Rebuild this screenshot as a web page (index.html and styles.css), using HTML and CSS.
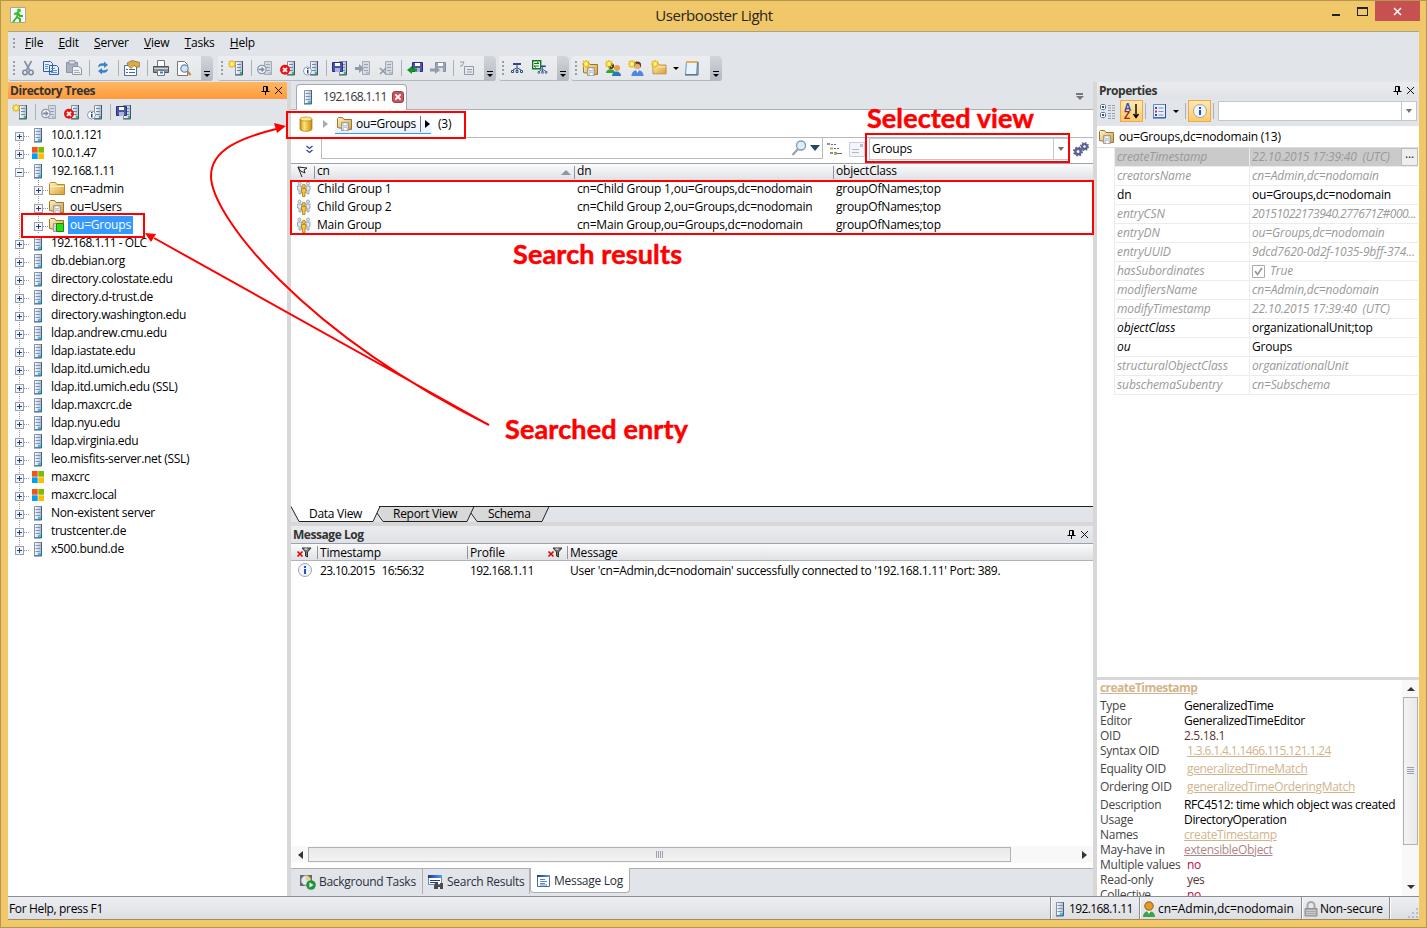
FILE: index.html
```html
<!DOCTYPE html>
<html lang="en">
<head>
  <meta charset="UTF-8" />
  <title>Userbooster Light</title>
  <link rel="stylesheet" href="styles.css">
</head>
<body>
  <!-- icon sprite -->
  <svg class="sprite">
    <defs>
      <linearGradient id="gFolder" x1="0" y1="0" x2="1" y2="1"><stop offset="0" stop-color="#fff3c4"/><stop offset="1" stop-color="#d9a02e"/></linearGradient>
      <linearGradient id="gGold" x1="0" x2="1"><stop offset="0" stop-color="#c98a08"/><stop offset=".35" stop-color="#ffe57a"/><stop offset="1" stop-color="#c98a08"/></linearGradient>
      <linearGradient id="gServer" x1="0" x2="1"><stop offset="0" stop-color="#ffffff"/><stop offset="1" stop-color="#a9bbd4"/></linearGradient>
      <linearGradient id="gCaption" x1="0" x2="1"><stop offset="0" stop-color="#16399c"/><stop offset="1" stop-color="#5b9cf2"/></linearGradient>
    </defs>
    <symbol id="server" viewBox="0 0 16 16"><path d="M4.500 1.500h7v13h-7z" fill="url(#gServer)" stroke="#8093ad"/><path d="M11.500 1v14H4" fill="none" stroke="#466080"/><path d="M5.500 4.500h5M5.500 7.500h5M5.500 10.500h5" stroke="#7f95b1"/><path d="M8 12h3v2H8z" fill="#23c6e8"/></symbol>
    <symbol id="srv" viewBox="0 0 16 16"><path d="M7.500 1.500h7v13h-7z" fill="url(#gServer)" stroke="#8290a6"/><path d="M14.500 1v14H7" fill="none" stroke="#43536c"/><path d="M9 4.500h4M9 7.500h4M9 10.500h4" stroke="#7388a5"/><path d="M12 12h2v2h-2z" fill="#28c84a"/></symbol>
    <symbol id="srv-gray" viewBox="0 0 16 16"><path d="M7.500 1.500h7v13h-7z" fill="#d5d9e1" stroke="#a3abb9"/><path d="M9 4.500h4M9 7.500h4M9 10.500h4M11 13h3" stroke="#9aa3b3"/></symbol>
    <symbol id="spark" viewBox="0 0 16 16"><path d="M4 0v8M0 4h8M1 1l6 6M7 1L1 7" stroke="#e9b90a" stroke-width="1.500"/><circle cx="4" cy="4" r="1.900" fill="#fff38a"/></symbol>
    <symbol id="new-server" viewBox="0 0 16 16"><use href="#srv"/><use href="#spark"/></symbol>
    <symbol id="connect" viewBox="0 0 16 16"><use href="#srv-gray"/><circle cx="4.800" cy="9.500" r="4.200" fill="#fff" stroke="#8d98ab" stroke-width="1.200"/><path d="M1.500 8.500h3v-2l3.500 3-3.500 3v-2h-3z" fill="#8290a6"/></symbol>
    <symbol id="disconnect" viewBox="0 0 16 16"><use href="#srv"/><circle cx="5" cy="9.800" r="5" fill="#f00f10"/><path d="M3 7.800l4 4M7 7.800l-4 4" stroke="#fff" stroke-width="1.800"/></symbol>
    <symbol id="server-info" viewBox="0 0 16 16"><use href="#srv"/><circle cx="4.500" cy="11" r="4" fill="#fff" stroke="#8f9cb2"/><path d="M4 8h1.500v1.200H4zM4 10h1.500v3.500H4z" fill="#1c3f99"/></symbol>
    <symbol id="floppy" viewBox="0 0 16 16"><path d="M.5 2.500h10v9H.5z" fill="#4c53ac" stroke="#292f78"/><path d="M3 3h5v3H3z" fill="#fff"/><path d="M3 8h5v4H3z" fill="#aeb4d8"/></symbol>
    <symbol id="floppy-gray" viewBox="0 0 16 16"><path d="M.5 2.500h10v9H.5z" fill="#9ba3b3" stroke="#858fa1"/><path d="M3 3h5v3H3z" fill="#fff"/><path d="M3 8h5v4H3z" fill="#dadee5"/></symbol>
    <symbol id="save-server" viewBox="0 0 16 16"><use href="#srv"/><use href="#floppy"/></symbol>
    <symbol id="import" viewBox="0 0 16 16"><use href="#srv-gray"/><path d="M0 7h4V4l5 4.500-5 4.500v-3H0z" fill="#929baa"/></symbol>
    <symbol id="remove" viewBox="0 0 16 16"><use href="#srv-gray"/><path d="M2 8l6 6M8 8l-6 6" stroke="#929baa" stroke-width="1.700"/></symbol>
    <symbol id="load" viewBox="0 0 16 16"><use href="#floppy" x="5" y="0"/><path d="M0 10l5-4v2.500h5v3H5V14z" fill="#0c9a1f"/></symbol>
    <symbol id="store" viewBox="0 0 16 16"><use href="#floppy-gray" x="5" y="0"/><path d="M10 10L5 6v2.500H0v3h5V14z" fill="#929baa"/></symbol>
    <symbol id="rename" viewBox="0 0 16 16"><path d="M1 2h4l-2 4H1M5.500 6.500h9v8h-9zM8 9.500h5M8 12h5" fill="none" stroke="#9199a8"/></symbol>
    <symbol id="cut" viewBox="0 0 16 16"><path d="M4.500 1l5 9M11.500 1l-5 9" stroke="#8390a5" stroke-width="1.600"/><circle cx="5" cy="12.500" r="2.200" fill="none" stroke="#7c879b" stroke-width="1.500"/><circle cx="11" cy="12.500" r="2.200" fill="none" stroke="#7c879b" stroke-width="1.500"/></symbol>
    <symbol id="copy" viewBox="0 0 16 16"><path d="M.5 1.500h7l2 2v8h-9zM6.500 5.500h7l2 2v7h-9z" fill="#e6f1fd" stroke="#325bb0"/><path d="M2 4.500h4M2 6.500h3M2 8.500h3M8 8.500h4M8 10.500h6M8 12.500h6" stroke="#5c8fd8"/></symbol>
    <symbol id="paste" viewBox="0 0 16 16"><path d="M.5 2.500h11v10H.5z" fill="#aab2c0" stroke="#8b95a7"/><path d="M3 .8h6V4H3z" fill="#dce0e7" stroke="#8b95a7"/><path d="M6.500 6.500h6l3 2v6h-9z" fill="#eef0f4" stroke="#8b95a7"/><path d="M8 10.500h5M8 12.500h6" stroke="#a5adba"/></symbol>
    <symbol id="refresh" viewBox="0 0 16 16"><path d="M3 7.500c0-3.500 3-5 6-4V1.500L13 5 9 8V6C7 5.500 5 6 3 7.500zM13 9c0 3-3 4.500-6 3.500v2L3 11l4-3v2c2 .5 4 0 6-1z" fill="#3b83c7"/></symbol>
    <symbol id="props" viewBox="0 0 16 16"><path d="M.5 5.500h12v10H.5z" fill="#fff" stroke="#50709a"/><path d="M2 9.500h2M5 9.500h6M2 12.500h2M5 12.500h6" stroke="#4067a3"/><path d="M3 3l5-2.500 8 2v4l-3 1-3-2-3 3-3-3z" fill="#dca94a" stroke="#8f6a20" stroke-width=".7"/></symbol>
    <symbol id="print" viewBox="0 0 16 16"><path d="M4.500.5h7v6h-7z" fill="#fff" stroke="#777"/><path d="M.5 6.500h15v6H.5z" fill="#8c929b" stroke="#4e5259"/><path d="M1 8.500h14" stroke="#d1d4d8"/><path d="M4.500 10.500h7v5h-7z" fill="#fff" stroke="#777"/><path d="M7 12.500h3" stroke="#2683d6" stroke-width="2"/></symbol>
    <symbol id="preview" viewBox="0 0 16 16"><path d="M1.500 1.500h7l3 3v11h-10z" fill="#fff" stroke="#777"/><circle cx="8.500" cy="8.500" r="3.700" fill="#cfe6f7" stroke="#6787a7" stroke-width="1.200"/><path d="M11.500 11.500l3 3.500" stroke="#c8893c" stroke-width="2.400"/></symbol>
    <symbol id="schema" viewBox="0 0 16 16"><path d="M4 3h8v2H4z" fill="#2d4a8c"/><path d="M8 5v5M7.500 8L4 10M8.500 8l3.500 2" stroke="#2d4a8c"/><path d="M2.500 10.500h2v2h-2zM7 10.500h2v2H7zM11.500 10.500h2v2h-2z" fill="#fff" stroke="#2d4a8c"/></symbol>
    <symbol id="schema-sync" viewBox="0 0 16 16"><use href="#schema" x="4" y="3" width="13" height="13"/><path d="M.7.7h8v8h-8z" fill="#fff" stroke="#087c1c" stroke-width="1.400"/><path d="M2 3.500h5M5 2l2 1.500M7 6H2l2 1.500" fill="none" stroke="#087c1c"/></symbol>
    <symbol id="folder" viewBox="0 0 16 16"><path d="M.5 13.500v-11l1-1h5l1.500 2h7.500v10z" fill="url(#gFolder)" stroke="#b88a32"/><path d="M1 5.500h14" stroke="#fff0bd"/></symbol>
    <symbol id="ou" viewBox="0 0 16 16"><path d="M.5 11.500v-9l1-1h4l1.500 2h7.500v10h-4z" fill="url(#gFolder)" stroke="#9a7730"/><path d="M4.500 6.500h7v8h-7z" fill="#d9dbde" stroke="#999da3"/><path d="M6 7h4v2.500H6zM6.500 11.500h3.500v3H6.500z" fill="#fff" stroke="#a7abb1" stroke-width=".6"/></symbol>
    <symbol id="ou-active" viewBox="0 0 16 16"><use href="#ou"/><path d="M7.500 6.500h7v8h-7z" fill="#28df13" stroke="#168a0a"/></symbol>
    <symbol id="new-ou" viewBox="0 0 16 16"><use href="#ou" x="1" y="1" width="16" height="16"/><use href="#spark"/></symbol>
    <symbol id="new-folder" viewBox="0 0 16 16"><use href="#folder" x="1" y="2" width="15" height="14"/><use href="#spark"/></symbol>
    <symbol id="new-group" viewBox="0 0 16 16"><circle cx="6" cy="6" r="3" fill="#493226"/><path d="M1 13c0-5 9-5 9 0z" fill="#34a42c"/><circle cx="12" cy="8" r="3" fill="#e8a04a"/><path d="M7 16c0-6 9-6 9 0z" fill="#2478c4"/><use href="#spark"/></symbol>
    <symbol id="new-user" viewBox="0 0 16 16"><circle cx="9.500" cy="5" r="3.600" fill="#5a3a28"/><circle cx="9.500" cy="6.500" r="2.700" fill="#e3ab7e"/><path d="M3.500 16c0-8 12-8 12 0z" fill="#4e86e0"/><path d="M8 10l1.500 3 1.500-3z" fill="#fff"/><use href="#spark"/></symbol>
    <symbol id="notepad" viewBox="0 0 16 16"><path d="M2.500 1.500h11l-1 13h-11z" fill="#e8f4fd" stroke="#6f93b5"/><path d="M2 1h12v2H2z" fill="#e9ae54"/><path d="M14 2v13H1" fill="none" stroke="#3e5a76"/></symbol>
    <symbol id="windows" viewBox="0 0 16 16"><path d="M2 2h5.700v5.700H2z" fill="#f65314"/><path d="M8.300 2H14v5.700H8.300z" fill="#7cbb00"/><path d="M2 8.300h5.700V14H2z" fill="#00a1f1"/><path d="M8.300 8.300H14V14H8.300z" fill="#ffbb00"/></symbol>
    <symbol id="database" viewBox="0 0 16 16"><path d="M2 3v10c0 3 12 3 12 0V3z" fill="url(#gGold)" stroke="#a87608" stroke-width=".7"/><ellipse cx="8" cy="3" rx="6" ry="2" fill="#ffe892" stroke="#b78712" stroke-width=".7"/></symbol>
    <symbol id="group" viewBox="0 0 16 16"><g fill="#dfe7ee" stroke="#8498ab" stroke-width=".8"><circle cx="3.500" cy="2.500" r="1.500"/><circle cx="12" cy="2.500" r="1.500"/><path d="M1.500 5h4v4H5v4H3V9H1.500zM10 5h4v4h-1v4h-2V9H10z"/></g><g fill="#fbc336" stroke="#a97a16" stroke-width=".8"><circle cx="7.800" cy="5" r="1.700"/><path d="M5.500 7.500h4.500v4H9v4H6.500v-4h-1z"/></g></symbol>
    <symbol id="search" viewBox="0 0 16 16"><circle cx="10" cy="5.500" r="4.500" fill="#dceefb" stroke="#8199b7" stroke-width="1.300"/><path d="M7 9l-5.500 6" stroke="#9b9ba1" stroke-width="2"/></symbol>
    <symbol id="scope" viewBox="0 0 16 16"><path d="M1 2h3v2H1zM4 11h3v2H4zM8 11h3v2H8z" fill="#7a95b5"/><path d="M5 3.500h2M8 3.500h2M8 7.500h2M11 7.500h2M11 12.500h5" stroke="#516f93"/><path d="M4 6.500h3v2H4zM8 12h3v2H8z" fill="#d3ae20"/></symbol>
    <symbol id="form" viewBox="0 0 16 16"><path d="M.5 1.500h15v14H.5z" fill="#f3f5fa" stroke="#c8cedb"/><path d="M3 8.500h7M3 11.500h7" stroke="#aeb8cb"/><path d="M11 3h3v3h-3z" fill="#b3c0dc"/></symbol>
    <symbol id="gears" viewBox="0 0 16 16"><circle cx="5" cy="10.500" r="2.700" fill="none" stroke="#5c608c" stroke-width="2.400"/><circle cx="5" cy="10.500" r="4.300" fill="none" stroke="#5c608c" stroke-width="1.400" stroke-dasharray="1.700 1.700"/><circle cx="11.500" cy="5.500" r="2.400" fill="none" stroke="#5c608c" stroke-width="2.200"/><circle cx="11.500" cy="5.500" r="3.900" fill="none" stroke="#5c608c" stroke-width="1.300" stroke-dasharray="1.500 1.550"/></symbol>
    <symbol id="flag" viewBox="0 0 16 16"><path d="M4 3l9 1-3 2 1 3-4.500-2zM4 3l4 10" fill="none" stroke="#222"/></symbol>
    <symbol id="filter" viewBox="0 0 16 16"><path d="M6 4h9l-3.500 4v5l-2-1V8z" fill="#777" stroke="#333"/><path d="M8.500 5h3" stroke="#fff"/><path d="M1.500 7.500l5 5M6.500 7.500l-5 5" stroke="#e00000" stroke-width="1.600"/></symbol>
    <symbol id="info" viewBox="0 0 16 16"><circle cx="8" cy="8" r="6.500" fill="#f4f5f8" stroke="#9fa5b0"/><path d="M7 4h2v2H7zM7 7h2v5H7z" fill="#1751e0"/></symbol>
    <symbol id="category" viewBox="0 0 16 16"><path d="M1.500 1.500h3l1 1v3l-1 1h-3l-1-1v-3zM1.500 9.500h3l1 1v3l-1 1h-3l-1-1v-3z" fill="#fff" stroke="#4e77a2"/><path d="M2 4h2M3 3v2M2 12h2M3 11v2" stroke="#111"/><path d="M8 2.500h3M12 2.500h3M8 5h3M12 5h3M8 7.500h3M12 7.500h3M8 10.500h3M12 10.500h3M8 13h3M12 13h3M8 15.500h3M12 15.500h3" stroke="#9a9ea4"/></symbol>
    <symbol id="list" viewBox="0 0 16 16"><path d="M1.500 1.500h12v13h-12z" fill="#e8effc" stroke="#6686c0"/><path d="M13.500 1v14H1" fill="none" stroke="#2a4f9e"/><path d="M3 4h2v2H3zM3 11h2v2H3z" fill="#1d4cca"/><path d="M3 7.500h2v2H3z" fill="#dd2b17"/><path d="M6.500 5h5M6.500 8.500h5M6.500 12h5" stroke="#8191b0"/></symbol>
    <symbol id="tasks" viewBox="0 0 16 16"><path d="M0 1h12v11H0z" fill="#686868"/><circle cx="6" cy="6.500" r="4.700" fill="#e1eaf4" stroke="#b3bac5"/><path d="M6 6.500V2a4.500 4.500 0 0 1 4.500 4.500z" fill="#f7ce78"/><circle cx="11" cy="11" r="4.800" fill="#20943a"/><path d="M9.500 8.500l4 2.500-4 2.500z" fill="#fff"/></symbol>
    <symbol id="results" viewBox="0 0 16 16"><path d="M.5 1.500h13v9H.5z" fill="#fff" stroke="#6e87b9"/><path d="M0 1h14v3H0z" fill="url(#gCaption)"/><path d="M2 6.500h10M2 8.500h8" stroke="#27407b"/><path d="M7 9h3v2h2V9h3v6h-3v-2h-2v2H6v-3z" fill="#4c4c4c"/></symbol>
    <symbol id="log" viewBox="0 0 16 16"><path d="M1.500 2.500h12v11h-12z" fill="#fff" stroke="#476cae"/><path d="M1 2h13v2H1z" fill="url(#gCaption)"/><path d="M4 6.500h5M4 8.500h7M4 10.500h5M4 12h7" stroke="#5f82c4"/></symbol>
    <symbol id="user" viewBox="0 0 16 16"><path d="M2 16c0-8 12-8 12 0z" fill="#3aa34c"/><path d="M6 10l2 3 2-3z" fill="#fff"/><circle cx="8" cy="5" r="4.200" fill="#e69a2a" stroke="#95570d"/></symbol>
    <symbol id="lock" viewBox="0 0 16 16"><path d="M4.500 8V4.500a3.500 3.500 0 0 1 7 0V8" fill="none" stroke="#a8a8a8" stroke-width="2"/><path d="M2 7.500h12V15H2z" fill="#aaa" stroke="#919191"/><path d="M3 9.500h10M3 11.500h10M3 13.500h10" stroke="#c9c9c9"/></symbol>
    <symbol id="pin" viewBox="0 0 9 9"><path d="M2.500.5h4v5h-4zM.5 5.500h8M4.500 6v3M5.500 1v4" fill="none" stroke="#000"/></symbol>
    <symbol id="close" viewBox="0 0 9 9"><path d="M1 1l7 7M8 1L1 8" stroke="#111" fill="none"/></symbol>
  </svg>

  <div class="window">
    <header class="titlebar">
      <svg class="app-icon" viewBox="0 0 16 16"><path d="M.5.500h15v15H.5z" fill="#f8f9fa" stroke="#aaa698"/><circle cx="9" cy="3.500" r="1.900" fill="#37c72d"/><path d="M4 7l4-1 2 3h3M8 6l-1 4 3 2v3M7 10l-4 5" fill="none" stroke="#37b72d" stroke-width="2"/></svg>
      <h1>Userbooster Light</h1>
      <div class="controls"><i class="min"></i><i class="max"></i><button class="close-btn"><svg viewBox="0 0 9 9"><path d="M1 1l7 7M8 1L1 8" stroke="#fff" stroke-width="1.500"/></svg></button></div>
    </header>

    <nav class="menu"><i class="grip"></i><span><u>F</u>ile</span><span><u>E</u>dit</span><span><u>S</u>erver</span><span><u>V</u>iew</span><span><u>T</u>asks</span><span><u>H</u>elp</span></nav>

    <div class="toolbars">
      <div class="bar bar-edit"><i class="grip"></i>
        <svg><use href="#cut"/></svg><svg><use href="#copy"/></svg><svg><use href="#paste"/></svg><i class="sep"></i><svg><use href="#refresh"/></svg><i class="sep"></i><svg><use href="#props"/></svg><i class="sep"></i><svg><use href="#print"/></svg><svg><use href="#preview"/></svg><i class="cap"></i>
      </div>
      <div class="bar bar-server"><i class="grip"></i>
        <svg><use href="#new-server"/></svg><i class="sep"></i><svg><use href="#connect"/></svg><svg><use href="#disconnect"/></svg><svg><use href="#server-info"/></svg><i class="sep"></i><svg><use href="#save-server"/></svg><svg><use href="#import"/></svg><svg><use href="#remove"/></svg><i class="sep"></i><svg><use href="#load"/></svg><svg><use href="#store"/></svg><i class="sep"></i><svg><use href="#rename"/></svg><i class="cap"></i>
      </div>
      <div class="bar bar-schema"><i class="grip"></i>
        <svg><use href="#schema"/></svg><svg><use href="#schema-sync"/></svg><i class="cap"></i>
      </div>
      <div class="bar bar-new"><i class="grip"></i>
        <svg><use href="#new-ou"/></svg><svg><use href="#new-group"/></svg><svg><use href="#new-user"/></svg><svg><use href="#new-folder"/></svg><i class="drop"></i><svg><use href="#notepad"/></svg><i class="cap"></i>
      </div>
    </div>

    <main class="panes">
      <aside class="trees">
        <div class="pane-head active"><b>Directory Trees</b><svg><use href="#pin"/></svg><svg><use href="#close"/></svg></div>
        <div class="tree-tools"><svg><use href="#new-server"/></svg><i class="sep"></i><svg><use href="#connect"/></svg><svg><use href="#disconnect"/></svg><svg><use href="#server-info"/></svg><i class="sep"></i><svg><use href="#save-server"/></svg></div>
        <ul class="tree">
          <li><i class="exp"></i><svg><use href="#server"/></svg><span class="num">10.0.1.121</span></li>
          <li><i class="exp"></i><svg><use href="#windows"/></svg><span class="num">10.0.1.47</span></li>
          <li><i class="exp open"></i><svg><use href="#server"/></svg><span class="num">192.168.1.11</span></li>
          <li class="child"><i class="exp"></i><svg><use href="#folder"/></svg><span>cn=admin</span></li>
          <li class="child"><i class="exp"></i><svg><use href="#ou"/></svg><span>ou=Users</span></li>
          <li class="child"><i class="exp"></i><svg><use href="#ou-active"/></svg><span class="selected">ou=Groups</span></li>
          <li><i class="exp"></i><svg><use href="#server"/></svg><span class="olc">192.168.1.11 - OLC</span></li>
          <li><i class="exp"></i><svg><use href="#server"/></svg><span>db.debian.org</span></li>
          <li><i class="exp"></i><svg><use href="#server"/></svg><span>directory.colostate.edu</span></li>
          <li><i class="exp"></i><svg><use href="#server"/></svg><span>directory.d-trust.de</span></li>
          <li><i class="exp"></i><svg><use href="#server"/></svg><span>directory.washington.edu</span></li>
          <li><i class="exp"></i><svg><use href="#server"/></svg><span>ldap.andrew.cmu.edu</span></li>
          <li><i class="exp"></i><svg><use href="#server"/></svg><span>ldap.iastate.edu</span></li>
          <li><i class="exp"></i><svg><use href="#server"/></svg><span>ldap.itd.umich.edu</span></li>
          <li><i class="exp"></i><svg><use href="#server"/></svg><span>ldap.itd.umich.edu (SSL)</span></li>
          <li><i class="exp"></i><svg><use href="#server"/></svg><span>ldap.maxcrc.de</span></li>
          <li><i class="exp"></i><svg><use href="#server"/></svg><span>ldap.nyu.edu</span></li>
          <li><i class="exp"></i><svg><use href="#server"/></svg><span>ldap.virginia.edu</span></li>
          <li><i class="exp"></i><svg><use href="#server"/></svg><span>leo.misfits-server.net (SSL)</span></li>
          <li><i class="exp"></i><svg><use href="#windows"/></svg><span>maxcrc</span></li>
          <li><i class="exp"></i><svg><use href="#windows"/></svg><span>maxcrc.local</span></li>
          <li><i class="exp"></i><svg><use href="#server"/></svg><span>Non-existent server</span></li>
          <li><i class="exp"></i><svg><use href="#server"/></svg><span>trustcenter.de</span></li>
          <li><i class="exp"></i><svg><use href="#server"/></svg><span>x500.bund.de</span></li>
        </ul>
      </aside>

      <section class="center">
        <div class="doc-tabs">
          <div class="doc-tab"><svg><use href="#server"/></svg><span class="num">192.168.1.11</span><i class="tab-close"><svg viewBox="0 0 9 9"><path d="M1.500 1.500l6 6M7.500 1.500l-6 6" stroke="#fff" stroke-width="2"/></svg></i></div>
          <i class="tab-menu"></i>
        </div>
        <div class="crumbs">
          <svg><use href="#database"/></svg><i class="arrow dim"></i>
          <div class="crumb"><svg><use href="#ou"/></svg><span>ou=Groups</span><i class="arrow"></i></div>
          <span>(3)</span>
        </div>
        <div class="search-row">
          <svg class="more" viewBox="0 0 9 9"><path d="M1.500 1l3 2.500 3-2.500M1.500 5l3 2.500 3-2.500" fill="none" stroke="#2b478f" stroke-width="1.300"/></svg>
          <div class="search-box"><svg><use href="#search"/></svg><i class="drop big"></i></div>
          <svg><use href="#scope"/></svg><svg class="form-ico"><use href="#form"/></svg>
          <div class="combo"><span>Groups</span><i class="combo-btn"></i></div>
          <svg class="gear"><use href="#gears"/></svg>
        </div>
        <div class="grid results">
          <div class="grid-head"><span><svg><use href="#flag"/></svg></span><span>cn<i class="sorted"></i></span><span>dn</span><span>objectClass</span></div>
          <div class="grid-row"><span><svg><use href="#group"/></svg></span><span>Child Group 1</span><span>cn=Child Group 1,ou=Groups,dc=nodomain</span><span>groupOfNames;top</span></div>
          <div class="grid-row"><span><svg><use href="#group"/></svg></span><span>Child Group 2</span><span>cn=Child Group 2,ou=Groups,dc=nodomain</span><span>groupOfNames;top</span></div>
          <div class="grid-row"><span><svg><use href="#group"/></svg></span><span>Main Group</span><span>cn=Main Group,ou=Groups,dc=nodomain</span><span>groupOfNames;top</span></div>
        </div>
        <div class="sheet-tabs">
          <svg class="sheet-lines" viewBox="0 0 802 16"><path d="M0 0l8 15h74l7-15z" fill="#fff"/><path d="M89 0h94l-7 15H93l-5-9zM183 0h75l-7 15h-65l-5-9z" fill="#d8d8d8"/><path d="M0 .5l8 15h74l7-15M86 7l6 8.500h84l7-15M180 7l6 8.500h65l7-15M88 .5h714" fill="none" stroke="#222"/></svg>
          <span>Data View</span><span>Report View</span><span>Schema</span>
        </div>
        <div class="log-pane">
          <div class="pane-head"><b>Message Log</b><svg><use href="#pin"/></svg><svg><use href="#close"/></svg></div>
          <div class="grid log">
            <div class="grid-head"><span><svg><use href="#filter"/></svg></span><span>Timestamp</span><span>Profile<svg><use href="#filter"/></svg></span><span>Message</span></div>
            <div class="grid-row"><span><svg><use href="#info"/></svg></span><span class="stamp">23.10.2015&nbsp; 16:56:32</span><span class="num">192.168.1.11</span><span class="msg">User 'cn=Admin,dc=nodomain' successfully connected to '192.168.1.11' Port: 389.</span></div>
          </div>
          <div class="hscroll"><i class="left"></i><div class="thumb"><i></i></div><i class="right"></i></div>
          <div class="bottom-tabs">
            <div><svg><use href="#tasks"/></svg><span>Background Tasks</span></div>
            <div><svg><use href="#results"/></svg><span>Search Results</span></div>
            <div class="current"><svg><use href="#log"/></svg><span>Message Log</span></div>
          </div>
        </div>
      </section>

      <aside class="properties">
        <div class="pane-head"><b>Properties</b><svg><use href="#pin"/></svg><svg><use href="#close"/></svg></div>
        <div class="prop-tools">
          <svg><use href="#category"/></svg><span class="toggled"><svg viewBox="0 0 16 16"><text x="0" y="7.500" class="az a">A</text><text x="0" y="15.500" class="az z">Z</text><path d="M12 1v13M9.500 11l2.500 3.500 2.500-3.500" fill="none" stroke="#000" stroke-width="1.400"/></svg></span><i class="sep"></i><svg><use href="#list"/></svg><i class="drop"></i><i class="sep"></i><span class="toggled"><svg><use href="#info"/></svg></span><i class="sep"></i>
          <div class="combo"><i class="combo-btn"></i></div>
        </div>
        <div class="entry"><svg><use href="#ou"/></svg><span>ou=Groups,dc=nodomain (13)</span></div>
        <dl class="props">
          <div class="ro picked"><dt>createTimestamp</dt><dd>22.10.2015 17:39:40&nbsp; (UTC)</dd><i class="dots">...</i></div>
          <div class="ro"><dt>creatorsName</dt><dd>cn=Admin,dc=nodomain</dd></div>
          <div><dt class="plain">dn</dt><dd>ou=Groups,dc=nodomain</dd></div>
          <div class="ro"><dt>entryCSN</dt><dd class="csn">20151022173940.277671Z#000...</dd></div>
          <div class="ro"><dt>entryDN</dt><dd>ou=Groups,dc=nodomain</dd></div>
          <div class="ro"><dt>entryUUID</dt><dd>9dcd7620-0d2f-1035-9bff-374...</dd></div>
          <div class="ro"><dt>hasSubordinates</dt><dd><svg class="check" viewBox="0 0 13 13"><path d="M.5.500h12v12H.5z" fill="#fff" stroke="#aaa"/><path d="M3 6l2.500 3.500L10 3" fill="none" stroke="#999" stroke-width="1.700"/></svg>True</dd></div>
          <div class="ro"><dt>modifiersName</dt><dd>cn=Admin,dc=nodomain</dd></div>
          <div class="ro"><dt>modifyTimestamp</dt><dd>22.10.2015 17:39:40&nbsp; (UTC)</dd></div>
          <div><dt>objectClass</dt><dd>organizationalUnit;top</dd></div>
          <div><dt>ou</dt><dd>Groups</dd></div>
          <div class="ro"><dt>structuralObjectClass</dt><dd>organizationalUnit</dd></div>
          <div class="ro"><dt>subschemaSubentry</dt><dd>cn=Subschema</dd></div>
        </dl>
        <div class="details">
          <div class="facts">
            <a class="title">createTimestamp</a>
            <p><span>Type</span>GeneralizedTime</p>
            <p><span>Editor</span>GeneralizedTimeEditor</p>
            <p><span>OID</span><em>2.5.18.1</em></p>
            <p class="tall"><span>Syntax OID</span><a class="in oid">1.3.6.1.4.1.1466.115.121.1.24</a></p>
            <p class="tall"><span>Equality OID</span><a class="in">generalizedTimeMatch</a></p>
            <p class="tall"><span>Ordering OID</span><a class="in">generalizedTimeOrderingMatch</a></p>
            <p><span>Description</span>RFC4512: time which object was created</p>
            <p><span>Usage</span>DirectoryOperation</p>
            <p><span>Names</span><a>createTimestamp</a></p>
            <p><span>May-have in</span><a class="visited">extensibleObject</a></p>
            <p><span>Multiple values</span><em class="in no">no</em></p>
            <p><span>Read-only</span><em class="in">yes</em></p>
            <p><span>Collective</span><em class="in no">no</em></p>
          </div>
          <div class="vscroll"><i class="up"></i><div class="thumb"><i></i></div><i class="down"></i></div>
        </div>
      </aside>
    </main>

    <footer class="status">
      <span class="help">For Help, press F1</span>
      <span class="cell c1"><svg><use href="#server"/></svg><span class="num">192.168.1.11</span></span>
      <span class="cell c2"><svg><use href="#user"/></svg>cn=Admin,dc=nodomain</span>
      <span class="cell c3"><svg><use href="#lock"/></svg>Non-secure</span>
      <span class="cell c4"><svg viewBox="0 0 12 12"><path d="M9 1h2v2H9zM5 5h2v2H5zM9 5h2v2H9zM1 9h2v2H1zM5 9h2v2H5zM9 9h2v2H9z" fill="#b9bdc6"/></svg></span>
    </footer>
  </div>

  <!-- red callouts over the window -->
  <svg class="callouts" viewBox="0 0 1427 928">
    <g fill="none" stroke="#f00" stroke-width="2">
      <path d="M287 112h178v26H287zM22 214h122v23H22zM866 134h203v28H866zM291 181h802v53H291z"/>
      <path d="M489 425C300 330 211 215 211 176C211 150 240 138 276 129M489 425L154 238"/>
    </g>
    <path d="M286 126l-12-3 3 10zM145 233l11 1-5 8z" fill="#f00"/>
    <text x="867" y="128" textLength="167">Selected view</text>
    <text x="513" y="264" textLength="169">Search results</text>
    <text x="505" y="439" textLength="183">Searched enrty</text>
  </svg>
</body>
</html>
```
FILE: styles.css
```css
* {
  box-sizing: border-box;
}

body {
  margin: 0;
  font-family: 'Open Sans', 'Noto Sans', sans-serif;
  font-size: 12px;
  letter-spacing: -0.2px;
  line-height: 18px;
  color: #000;
}

svg {
  width: 16px;
  height: 16px;
  flex: none;
}

i {
  font-style: normal;
  flex: none;
}

.num {
  letter-spacing: -0.62px;
}

.sprite {
  position: absolute;
  width: 0;
  height: 0;
}

.window {
  width: 1427px;
  height: 928px;
  padding: 0 7px 7px;
  background: #f0c869;
  border: 1px solid #b4964f;
  display: flex;
  flex-direction: column;
  overflow: hidden;
}

/* title bar */
.titlebar {
  height: 30px;
  flex: none;
  display: flex;
  justify-content: space-between;
}

.app-icon {
  margin: 6px 0 0 2px;
  width: 16px;
}

.titlebar h1 {
  margin: 0 0 0 71px;
  font-size: 15px;
  font-weight: 400;
  line-height: 29px;
  letter-spacing: -0.45px;
  color: #2a2519;
}

.controls {
  display: flex;
  width: 89px;
  margin-right: -1px;
}

.min {
  width: 8px;
  height: 2px;
  margin: 13px 0 0 1px;
  background: #222;
}

.max {
  width: 11px;
  height: 9px;
  margin: 6px 0 0 17px;
  border: 1px solid #222;
  border-top-width: 2px;
}

.close-btn {
  width: 45px;
  height: 20px;
  margin-left: 7px;
  padding: 0;
  border: 0;
  background: #c75050;
}

.close-btn svg {
  width: 9px;
  height: 9px;
}

/* menu and toolbars */
.menu {
  height: 25px;
  flex: none;
  display: flex;
  align-items: center;
  padding: 0 0 2px 5px;
  background: #e1e5e9;
  border-top: 1px solid #a9a28d;
}

.menu span {
  margin-right: 15.2px;
}

.grip {
  width: 2px;
  height: 14px;
  background: repeating-linear-gradient(#9a9fa6 0 2px, transparent 2px 4px);
}

.menu .grip {
  height: 11px;
  margin-right: 10px;
}

.toolbars {
  height: 26px;
  flex: none;
  display: flex;
  background: #e1e5e9;
}

.bar {
  height: 25px;
  display: flex;
  align-items: center;
  padding-left: 5px;
  border-bottom: 1px solid #b4b7bd;
  border-radius: 3px;
  background: linear-gradient(#ebedf0, #e4e7ea);
}

.bar svg {
  margin: 0 4px 0 3px;
}

.bar .grip {
  margin-right: 2px;
}

.bar-edit { width: 205px; margin-right: 5px; }
.bar-server { width: 278px; margin-right: 3px; padding-left: 3px; }
.bar-schema { width: 70px; margin-right: 2px; padding-left: 3px; }
.bar-new { width: 151px; padding-left: 4px; }

.sep {
  width: 1px;
  height: 16px;
  margin: 0 2px 0 3px;
  background: #adb1b7;
}

.cap {
  width: 12px;
  height: 25px;
  margin-left: auto;
  border-radius: 0 4px 4px 0;
  background: linear-gradient(#d2d5da, #b4b8c0);
  display: flex;
  flex-direction: column;
  align-items: center;
  justify-content: flex-end;
  gap: 2px;
  padding-bottom: 4px;
}

.cap::before {
  content: '';
  width: 6px;
  height: 1px;
  background: #000;
}

.cap::after {
  content: '';
  border: 3px solid transparent;
  border-top-color: #000;
  border-bottom: 0;
}

.drop {
  border: 3px solid transparent;
  border-top-color: #000;
  border-bottom: 0;
}

.bar .drop {
  margin: 0 2px;
}

.drop.big {
  border: 5px solid transparent;
  border-top: 6px solid #24475a;
  border-bottom: 0;
}

/* panes */
.panes {
  flex: 1;
  min-height: 0;
  display: flex;
  gap: 4px;
  background: #d7d7d7;
}

.pane-head {
  height: 17px;
  flex: none;
  display: flex;
  align-items: center;
  gap: 4px;
  padding: 0 4px 0 2px;
  background: linear-gradient(#eaebee, #dfe2e6);
}

.pane-head.active {
  background: linear-gradient(#ffb863, #fe9a3c);
}

.pane-head b {
  flex: 1;
  color: #333;
  font-weight: 700;
  letter-spacing: -0.45px;
}

.pane-head svg {
  width: 9px;
  height: 9px;
}

.trees {
  width: 279px;
  display: flex;
  flex-direction: column;
  background: #fff;
}

.tree-tools {
  height: 27px;
  flex: none;
  display: flex;
  align-items: center;
  padding: 0 0 1px 1px;
  background: #e1e5e9;
}

.tree-tools svg {
  margin: 0 4px 0 3px;
}

.tree {
  list-style: none;
  margin: 0;
  padding: 0 0 0 7px;
}

.tree li {
  height: 18px;
  display: flex;
  align-items: center;
  background: repeating-linear-gradient(#999 0 1px, transparent 1px 2px) 4px 0 / 1px 100% no-repeat;
}

.tree li:first-child {
  background-position: 4px 10px;
}

.tree li:last-child {
  background-size: 1px 10px;
}

.tree li.child {
  padding-left: 19px;
  background:
    repeating-linear-gradient(#999 0 1px, transparent 1px 2px) 4px 0 / 1px 100% no-repeat,
    repeating-linear-gradient(#999 0 1px, transparent 1px 2px) 23px 0 / 1px 100% no-repeat;
}

.exp {
  width: 9px;
  height: 9px;
  margin: 2px 6px 0 0;
  border: 1px solid #9a9ea5;
  background:
    linear-gradient(#223f8c, #223f8c) center / 5px 1px no-repeat,
    linear-gradient(#223f8c, #223f8c) center / 1px 5px no-repeat,
    #f3f4f6;
  position: relative;
}

.exp::after {
  content: '';
  position: absolute;
  left: 8px;
  top: 3px;
  width: 6px;
  height: 1px;
  background: repeating-linear-gradient(90deg, #999 0 1px, transparent 1px 2px);
}

.exp.open {
  background: linear-gradient(#223f8c, #223f8c) center / 5px 1px no-repeat, #f3f4f6;
}

.tree svg {
  margin-right: 3px;
}

.tree span {
  padding: 0 2px;
}

.tree span:not(.num) {
  letter-spacing: -0.32px;
}

.tree .child span {
  letter-spacing: -0.2px;
}

.tree span.olc {
  letter-spacing: -0.5px;
}

.tree .selected {
  background: #3399ff;
  color: #fff;
}

/* center */
.center {
  width: 802px;
  display: flex;
  flex-direction: column;
  background: #fff;
}

.doc-tabs {
  height: 28px;
  flex: none;
  display: flex;
  justify-content: space-between;
  padding: 2px 8px 0 5px;
  background: #e1e5e9;
  border-bottom: 1px solid #adafb5;
}

.doc-tab {
  width: 111px;
  height: 26px;
  display: flex;
  align-items: center;
  padding: 0 0 1px 3px;
  border: 1px solid #a5a8ae;
  border-bottom: 0;
  border-radius: 4px 4px 0 0;
  background: #fff;
}

.doc-tab span {
  width: 69px;
  margin-left: 7px;
  color: #333;
}

.tab-close {
  width: 12px;
  height: 12px;
  border-radius: 3px;
  background: #c55760;
  border: 1px solid #a33b45;
  display: flex;
  align-items: center;
  justify-content: center;
}

.tab-close svg {
  width: 8px;
  height: 8px;
}

.tab-menu {
  width: 9px;
  height: 8px;
  margin: 8px 1px 0 0;
  background: linear-gradient(#777, #777) center 1px / 7px 2px no-repeat;
}

.tab-menu::after {
  content: '';
  display: block;
  margin: 4px 1px 0;
  border: 4px solid transparent;
  border-top-color: #777;
  border-bottom: 0;
  width: 0;
}

.crumbs {
  height: 28px;
  flex: none;
  display: flex;
  align-items: center;
  padding: 1px 0 0 7px;
  border-bottom: 1px solid #b9b9b9;
}

.arrow {
  border: 4px solid transparent;
  border-left: 5px solid #000;
  border-right: 0;
}

.arrow.dim {
  margin: 0 7px 0 9px;
  border-left-color: #aaa;
}

.crumb {
  width: 96px;
  height: 19px;
  display: flex;
  align-items: center;
  padding-left: 2px;
  margin-right: 7px;
  border-bottom: 1px solid #3d95f4;
  background: linear-gradient(#fff, #e8f2fc);
}

.crumb span {
  width: 65px;
  margin: 0 4px 0 3px;
  border-right: 1px solid #777;
  line-height: 15px;
  padding-bottom: 1px;
  letter-spacing: -0.3px;
}

.search-row {
  height: 25px;
  flex: none;
  display: flex;
  align-items: center;
  padding: 0 0 3px 14px;
}

.more {
  width: 9px;
  height: 9px;
  margin-right: 7px;
}

.search-box {
  width: 502px;
  height: 21px;
  align-self: flex-start;
  display: flex;
  align-items: center;
  justify-content: flex-end;
  gap: 3px;
  padding-right: 2px;
  margin-right: 3px;
  border: 1px solid #bbb;
  border-top: 0;
}

.form-ico {
  margin: 0 4px 0 7px;
}

.combo {
  height: 22px;
  display: flex;
  border: 1px solid #c3c6cb;
  background: #fff;
}

.search-row .combo {
  width: 200px;
  line-height: 20px;
  padding-left: 2px;
}

.combo-btn {
  width: 15px;
  margin-left: auto;
  border-left: 1px solid #c3c6cb;
  display: flex;
  align-items: center;
  justify-content: center;
}

.combo-btn::after {
  content: '';
  border: 3px solid transparent;
  border-top: 4px solid #707070;
  border-bottom: 0;
}

.gear {
  margin-left: 4px;
}

/* grids */
.grid-head {
  height: 18px;
  display: grid;
  align-items: center;
  background: linear-gradient(#fbfbfc, #dfe1e5);
  border-top: 1px solid #9da2aa;
  border-bottom: 1px solid #aeb2b9;
}

.grid-row {
  height: 18px;
  display: grid;
}

.grid span {
  height: 16px;
  line-height: 15px;
  display: flex;
  align-items: center;
  padding-left: 3px;
  white-space: nowrap;
}

.grid-row span {
  height: 18px;
}

.grid-head span + span {
  border-left: 1px solid #8f949c;
  padding-left: 2px;
  height: 13px;
}

.grid .stamp {
  letter-spacing: -0.66px;
  word-spacing: 1px;
}

.grid .msg {
  letter-spacing: -0.29px;
}

.results {
  height: 343px;
  flex: none;
}

.results .grid-head {
  margin-bottom: -1px;
}

.results .grid-head,
.results .grid-row {
  grid-template-columns: 23px 260px 259px 260px;
}

.results .grid-head span:not(:first-child) {
  padding-bottom: 3px;
}

.results .grid-row span {
  padding-bottom: 1px;
}

.results .grid-row svg {
  margin-left: 2px;
}

.sorted {
  margin: 3px 3px 0 auto;
  border: 5px solid transparent;
  border-bottom: 5px solid #8b97a4;
  border-top: 0;
}

.sheet-tabs {
  height: 16px;
  flex: none;
  display: flex;
  position: relative;
  background: #e1e5e9;
  line-height: 15px;
}

.sheet-lines {
  position: absolute;
  width: 802px;
  height: 16px;
}

.sheet-tabs span {
  position: relative;
  margin-left: 18px;
  width: 66px;
  white-space: nowrap;
  letter-spacing: -0.28px;
}

.sheet-tabs span + span {
  width: 77px;
}

.log-pane {
  flex: 1;
  min-height: 0;
  display: flex;
  flex-direction: column;
  border-top: 4px solid #d7d7d7;
}

.log {
  flex: 1;
}

.log .grid-head,
.log .grid-row {
  grid-template-columns: 26px 150px 100px 526px;
}

.log .grid-head span + span svg {
  margin: 0 4px 0 auto;
}

.log .grid-head span:first-child {
  padding-left: 5px;
}

.log .grid-row span:first-child {
  padding-left: 6px;
}

.hscroll {
  height: 17px;
  flex: none;
  display: flex;
  align-items: center;
  background: #f8f8f8;
}

.hscroll .thumb {
  width: 703px;
  height: 15px;
  border: 1px solid #b1b1b4;
  background: linear-gradient(#e9e9eb, #f3f3f3);
  display: flex;
  align-items: center;
  justify-content: center;
}

.hscroll .thumb i {
  width: 8px;
  height: 7px;
  background: repeating-linear-gradient(90deg, #98a0b1 0 1px, transparent 1px 2px);
}

.left,
.right {
  border: 4px solid transparent;
}

.left {
  border-right: 5px solid #333;
  border-left: 0;
  margin: 0 5px 0 7px;
}

.right {
  border-left: 5px solid #333;
  border-right: 0;
  margin: 0 6px 0 auto;
}

.bottom-tabs {
  height: 28px;
  flex: none;
  margin-top: 5px;
  display: flex;
  background: #e1e5e9;
  border-top: 1px solid #adafb5;
}

.bottom-tabs div {
  height: 25px;
  display: flex;
  align-items: center;
  gap: 3px;
  padding-left: 9px;
  width: 132px;
  border-right: 1px solid #adafb5;
  color: #2b3040;
  letter-spacing: -0.28px;
}

.bottom-tabs div + div {
  width: 107px;
  padding-left: 5px;
}

.bottom-tabs .current {
  width: 100px;
  padding-top: 2px;
  gap: 2px;
  background: #fff;
  border: 1px solid #adafb5;
  border-top: 0;
  border-radius: 0 0 4px 4px;
  margin-top: -1px;
}

/* properties */
.properties {
  width: 322px;
  display: flex;
  flex-direction: column;
  background: #fff;
}

.prop-tools {
  height: 27px;
  flex: none;
  display: flex;
  align-items: center;
  padding: 0 2px 3px 3px;
  background: #e1e5e9;
}

.toggled {
  width: 23px;
  height: 22px;
  margin-left: 4px;
  display: flex;
  align-items: center;
  justify-content: center;
  border: 1px solid #f1a64a;
  background: linear-gradient(#fde9b4, #fecb67);
}

.prop-tools .sep {
  margin: 0 2px;
}

.prop-tools > svg + .drop {
  margin: 0 4px 0 5px;
}

.prop-tools .sep + svg {
  margin-left: 4px;
}

.prop-tools .sep + .toggled {
  margin-left: 0;
}

.prop-tools .combo {
  flex: 1;
  height: 20px;
  margin-left: 2px;
}

.az {
  font-family: 'Liberation Sans', sans-serif;
  font-size: 10px;
  font-weight: 700;
}

.az.a { fill: #2a50b8; }
.az.z { fill: #97242d; }

.entry {
  height: 22px;
  flex: none;
  display: flex;
  align-items: center;
  gap: 4px;
  padding-left: 2px;
  border-bottom: 1px solid #ddd;
}

.props {
  margin: 0;
  padding: 0 1px 0 17px;
  flex: 1;
}

.props div {
  height: 19px;
  display: flex;
  position: relative;
  border-bottom: 1px solid #ececec;
  border-left: 1px solid #ececec;
}

.props dt {
  width: 135px;
  flex: none;
  padding-left: 2px;
  border-right: 1px solid #ececec;
  font-style: italic;
  letter-spacing: -0.1px;
}

.props dt.plain {
  font-style: normal;
}

.props dd {
  margin: 0;
  padding-left: 2px;
  white-space: nowrap;
  display: flex;
  align-items: center;
}

.props .ro {
  color: #999;
  font-style: italic;
}

.props .ro dd {
  letter-spacing: -0.16px;
}

.props .ro .csn {
  letter-spacing: -0.5px;
}

.props .picked {
  background: #cacaca;
}

.check {
  width: 13px;
  height: 13px;
  margin-right: 5px;
}

.dots {
  position: absolute;
  right: 0;
  top: 0;
  width: 17px;
  height: 18px;
  border: 1px solid #bbb;
  background: #eee;
  color: #222;
  line-height: 10px;
  text-align: center;
}

.details {
  height: 219px;
  flex: none;
  display: flex;
  overflow: hidden;
  border-top: 3px solid #d7d7d7;
}

.facts {
  flex: 1;
  padding-left: 3px;
  line-height: 15px;
  letter-spacing: -0.33px;
  white-space: nowrap;
}

.facts p {
  margin: 0;
  height: 15px;
  display: flex;
}

.facts p.tall {
  height: 18px;
}

.facts p span {
  width: 84px;
  color: #444;
  letter-spacing: -0.25px;
}

.facts a {
  color: #d2b48c;
  text-decoration: underline;
}

.facts a.oid {
  letter-spacing: -0.63px;
}

.facts a.title {
  display: block;
  font-weight: 700;
  height: 18px;
  line-height: 16px;
  letter-spacing: -0.55px;
}

.facts a.visited {
  color: #b08488;
}

.facts em {
  font-style: normal;
  color: #5a3535;
}

.facts em.no {
  color: #b01040;
}

.facts .in {
  margin-left: 3px;
}

.vscroll {
  width: 17px;
  display: flex;
  flex-direction: column;
  align-items: center;
  background: #f8f8f8;
}

.vscroll .thumb {
  width: 15px;
  height: 148px;
  border: 1px solid #b1b1b4;
  background: linear-gradient(90deg, #f3f3f3, #e9e9eb);
  display: flex;
  align-items: center;
  justify-content: center;
}

.vscroll .thumb i {
  width: 7px;
  height: 8px;
  background: repeating-linear-gradient(#98a0b1 0 1px, transparent 1px 2px);
}

.up,
.down {
  border: 4px solid transparent;
}

.up {
  border-bottom: 4px solid #333;
  border-top: 0;
  margin: 7px 0 6px;
}

.down {
  border-top: 4px solid #333;
  border-bottom: 0;
  margin: auto 0 7px;
}

/* status bar */
.status {
  height: 24px;
  flex: none;
  display: flex;
  align-items: center;
  border-top: 1px solid #8a8d94;
  border-bottom: 1px solid #a08b5c;
  background: linear-gradient(#eeeff2, #dcdee3);
}

.help {
  flex: 1;
  padding: 2px 0 0 1px;
  letter-spacing: -0.35px;
}

.cell {
  height: 22px;
  display: flex;
  align-items: center;
  gap: 1px;
  border-left: 1px solid #8a8d94;
  box-shadow: inset 1px 0 0 #fff;
  padding: 2px 0 0 1px;
  white-space: nowrap;
}

.c1 { width: 89px; }
.c2 { width: 162px; letter-spacing: -0.05px; }
.c3 { width: 88px; }
.c4 { width: 30px; justify-content: flex-end; align-items: flex-end; }

.c4 svg {
  width: 12px;
  height: 12px;
}

/* callouts */
.callouts {
  position: absolute;
  left: 0;
  top: 0;
  width: 1427px;
  height: 928px;
  pointer-events: none;
}

.callouts text {
  font-family: Lato, 'Open Sans', sans-serif;
  font-size: 27px;
  font-weight: 700;
  letter-spacing: 0;
  fill: #f00;
  stroke: #f00;
  stroke-width: 0.5px;
}
```
